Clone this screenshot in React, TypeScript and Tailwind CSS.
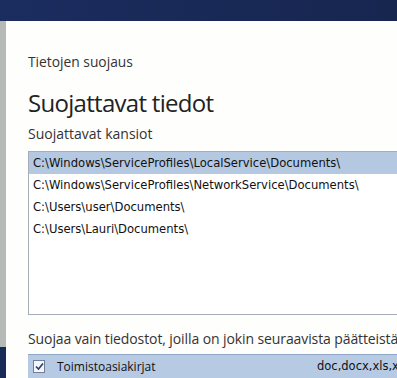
export default function App() {
  const folders = [
    'C:\\Windows\\ServiceProfiles\\LocalService\\Documents\\',
    'C:\\Windows\\ServiceProfiles\\NetworkService\\Documents\\',
    'C:\\Users\\user\\Documents\\',
    'C:\\Users\\Lauri\\Documents\\',
  ]

  return (
    <div className="w-[397px] h-[378px] overflow-hidden bg-white flex flex-col font-['Open_Sans',sans-serif]">
      {/* Title bar */}
      <div className="h-[21px] shrink-0 bg-gradient-to-r from-[#1b2c5f] to-[#17264f]" />

      <div className="flex flex-1 min-h-0">
        {/* Left edge */}
        <div className="w-[6px] shrink-0 flex flex-col">
          <div className="flex-1 bg-[#b6bab6]" />
          <div className="h-[31px] bg-[#1a2a58]" />
        </div>

        {/* Content */}
        <div className="flex-1 min-w-0 bg-[#fefefd] pl-[22px] pt-[32px] whitespace-nowrap">
          <div className="text-[13.8px] leading-[18px] text-[#333]">Tietojen suojaus</div>
          <h1 className="mt-[15px] text-[24px] leading-[34px] tracking-[-0.7px] text-[#222]">Suojattavat tiedot</h1>
          <div className="mt-[4px] text-[14px] leading-[19px] text-[#333]">Suojattavat kansiot</div>

          {/* Folder list */}
          <div className="mt-[8px] w-[420px] h-[164px] border border-[#a7adb5] bg-white font-['DejaVu_Sans',sans-serif] text-[11.6px] text-[#111]">
            {folders.map((f, i) => (
              <div
                key={f}
                className={
                  i === 0
                    ? 'h-[22px] flex items-center pl-[4px] pt-[1px] bg-[#b4c8e2]'
                    : 'h-[22px] flex items-center pl-[4px] pt-[1px]'
                }
              >
                {f}
              </div>
            ))}
          </div>

          <div className="mt-[14px] text-[14px] leading-[20px] tracking-[-0.1px] text-[#333]">
            Suojaa vain tiedostot, joilla on jokin seuraavista päätteistä
          </div>

          {/* Extension row */}
          <div className="mt-[5px] w-[420px] h-[24px] flex items-center border-t border-[#8fa8c8] bg-[#b6cae4] text-[12px] text-[#111]">
            <div className="ml-[5px] w-[12px] h-[13px] border border-[#6f7f96] bg-[#f4f6fa] flex items-center justify-center">
              <svg width="9" height="9" viewBox="0 0 9 9">
                <path d="M1 4.5 L3.5 7 L8 1.5" fill="none" stroke="#2a3a6a" strokeWidth="1.6" />
              </svg>
            </div>
            <span className="ml-[12px] w-[260px]">Toimistoasiakirjat</span>
            <span className="font-['DejaVu_Sans',sans-serif] text-[11.5px]">doc,docx,xls,xlsx</span>
          </div>
        </div>
      </div>
    </div>
  )
}
